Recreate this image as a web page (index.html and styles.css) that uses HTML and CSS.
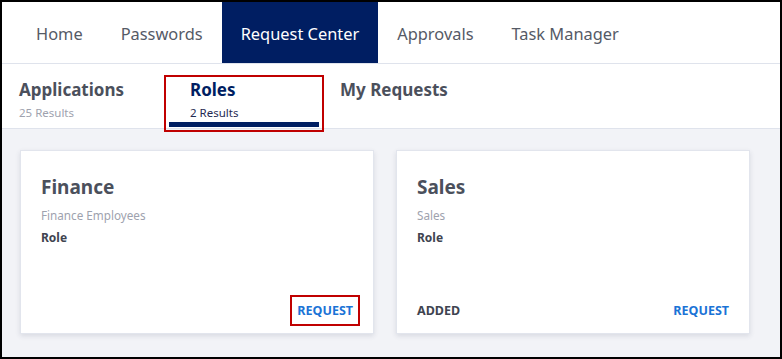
FILE: index.html
```html
<!DOCTYPE html>
<html lang="en">
<head>
  <meta charset="UTF-8" />
  <meta name="viewport" content="width=device-width,initial-scale=1" />
  <title>Request Center</title>
  <link rel="stylesheet" href="styles.css">
</head>
<body>
  <div class="app">
    <nav class="nav">
      <a class="nav-item">Home</a>
      <a class="nav-item">Passwords</a>
      <a class="nav-item active">Request Center</a>
      <a class="nav-item">Approvals</a>
      <a class="nav-item">Task Manager</a>
    </nav>

    <div class="tabs">
      <div class="tab">
        <div class="tab-title">Applications</div>
        <div class="tab-count">25 Results</div>
      </div>
      <div class="tab selected marked">
        <div class="tab-title">Roles</div>
        <div class="tab-count">2 Results</div>
      </div>
      <div class="tab tab-last">
        <div class="tab-title">My Requests</div>
      </div>
    </div>

    <main class="cards">
      <div class="card">
        <h2 class="card-title">Finance</h2>
        <div class="card-desc">Finance Employees</div>
        <div class="card-type">Role</div>
        <div class="card-foot">
          <span class="status"></span>
          <a class="action marked">REQUEST</a>
        </div>
      </div>
      <div class="card">
        <h2 class="card-title">Sales</h2>
        <div class="card-desc">Sales</div>
        <div class="card-type">Role</div>
        <div class="card-foot">
          <span class="status">ADDED</span>
          <a class="action">REQUEST</a>
        </div>
      </div>
    </main>
  </div>
</body>
</html>
```
FILE: styles.css
```css
:root {
  --navy: #001e62;
  --text: #4b505c;
  --muted: #9ea2ae;
  --line: #dfe3ec;
  --bg: #f2f3f7;
  --blue: #1a73d6;
  --mark: #c00000;
}
* { box-sizing: border-box; margin: 0; padding: 0 }
html, body { height: 100% }
body {
  background: #000;
  padding: 2px;
  font-family: "Noto Sans", "Open Sans", sans-serif;
  color: var(--text);
}
.app {
  height: 355px;
  background: var(--bg);
  display: flex;
  flex-direction: column;
}

.nav {
  display: flex;
  height: 62px;
  padding-left: 15px;
  background: #fff;
  border-bottom: 1px solid var(--line);
}
.nav-item {
  display: flex;
  align-items: center;
  padding: 1px 19px 0;
  font-size: 16.4px;
  color: #555a66;
  cursor: pointer;
}
.nav-item.active { background: var(--navy); color: #fff }

.tabs {
  display: flex;
  height: 65px;
  padding: 16px 0 0 17px;
  background: #fff;
  border-bottom: 1px solid var(--line);
}
.tab { width: 150px; height: 47px }
.tab-title { font-size: 17px; font-weight: 700; line-height: 20px; color: var(--text) }
.tab-count { margin-top: 5px; font-size: 11.5px; line-height: 16px; color: var(--muted) }
.tab.selected {
  padding-left: 21px;
  border-bottom: 5px solid var(--navy);
}
.tab.selected .tab-title { color: var(--navy) }
.tab.selected .tab-count { color: #1f2a52 }
.tab-last { margin-left: 21px }

.marked { outline: 2px solid var(--mark); outline-offset: 3px }

.cards {
  display: flex;
  gap: 22px;
  padding: 21px 0 0 18px;
}
.card {
  display: flex;
  flex-direction: column;
  width: 354px;
  height: 184px;
  padding: 23px 20px 14px 20px;
  background: #fff;
  border: 1px solid #e2e5ed;
  box-shadow: 0 2px 5px rgba(30,40,70,0.12);
}
.card-title { font-size: 19px; font-weight: 700; line-height: 26px; color: var(--text) }
.card-desc { margin-top: 7px; font-size: 11.7px; line-height: 17px; color: var(--muted) }
.card-type { margin-top: 5px; font-size: 12px; font-weight: 700; line-height: 17px; color: #3f4450 }
.card-foot {
  margin-top: auto;
  display: flex;
  justify-content: space-between;
  align-items: center;
  font-size: 12.5px;
  font-weight: 700;
  line-height: 17px;
}
.status { color: #3f4450 }
.action { color: var(--blue); cursor: pointer }
.action.marked { outline-offset: 5px }
```
